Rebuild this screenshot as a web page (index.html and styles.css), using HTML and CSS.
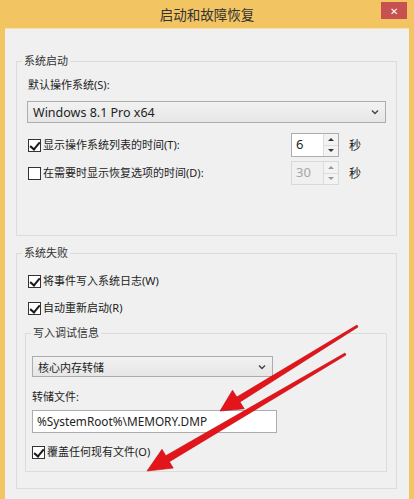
FILE: index.html
```html
<!DOCTYPE html>
<html lang="zh-CN">

<head>
    <meta charset="UTF-8">
    <title>启动和故障恢复</title>
    <link rel="stylesheet" href="styles.css">
</head>

<body>

    <div class="window">
        <div class="titlebar">
            <span class="title">启动和故障恢复</span>
            <span class="close">&#x2715;</span>
        </div>

        <div class="client">

            <fieldset class="group">
                <legend>系统启动</legend>
                <div class="group-body startup">
                    <div class="label">默认操作系统(S):</div>
                    <div class="select wide">
                        <span class="latin">Windows 8.1 Pro x64</span>
                        <svg class="chev" width="8" height="6" viewBox="0 0 8 6"><path d="M1 1.5 L4 4.5 L7 1.5" fill="none" stroke="#444" stroke-width="1.4"/></svg>
                    </div>
                    <div class="spin-row first">
                        <div class="check-label">
                            <span class="box checked"></span>
                            <span>显示操作系统列表的时间(T):</span>
                        </div>
                        <div class="spinner">
                            <span class="spin-value">6</span>
                            <span class="spin-btns">
                                <span class="up"></span>
                                <span class="down"></span>
                            </span>
                        </div>
                        <span class="unit">秒</span>
                    </div>
                    <div class="spin-row">
                        <div class="check-label">
                            <span class="box"></span>
                            <span>在需要时显示恢复选项的时间(D):</span>
                        </div>
                        <div class="spinner disabled">
                            <span class="spin-value">30</span>
                            <span class="spin-btns">
                                <span class="up"></span>
                                <span class="down"></span>
                            </span>
                        </div>
                        <span class="unit">秒</span>
                    </div>
                </div>
            </fieldset>

            <fieldset class="group failure">
                <legend>系统失败</legend>
                <div class="group-body">
                    <div class="check-label row-a">
                        <span class="box checked"></span>
                        <span>将事件写入系统日志(W)</span>
                    </div>
                    <div class="check-label row-b">
                        <span class="box checked"></span>
                        <span>自动重新启动(R)</span>
                    </div>

                    <fieldset class="group inner">
                        <legend>写入调试信息</legend>
                        <div class="group-body">
                            <div class="select dump">
                                <span>核心内存转储</span>
                                <svg class="chev" width="8" height="6" viewBox="0 0 8 6"><path d="M1 1.5 L4 4.5 L7 1.5" fill="none" stroke="#444" stroke-width="1.4"/></svg>
                            </div>
                            <div class="label file-label">转储文件:</div>
                            <div class="textbox">%SystemRoot%\MEMORY.DMP</div>
                            <div class="check-label row-c">
                                <span class="box checked"></span>
                                <span>覆盖任何现有文件(O)</span>
                            </div>
                        </div>
                    </fieldset>
                </div>
            </fieldset>

        </div>

        <!-- red annotation arrows drawn over the dialog -->
        <svg class="arrows" width="414" height="499" viewBox="0 0 414 499">
            <polygon points="357,325 358,327 240,402 244.3,408.8 220,411 232.5,390.2 236.8,397" fill="#e3141a" stroke="#c00810" stroke-width="0.6" stroke-linejoin="round"/>
            <polygon points="345,353 346,355 169.4,461.7 173.2,468.1 147,471 162,449.3 165.8,455.7" fill="#e3141a" stroke="#c00810" stroke-width="0.6" stroke-linejoin="round"/>
        </svg>
    </div>

</body>

</html>
```

FILE: styles.css
```css
* {
    margin: 0;
    padding: 0;
    box-sizing: border-box;
}

body {
    width: 414px;
    height: 499px;
    overflow: hidden;
    font-family: "Noto Sans", "Noto Sans CJK SC", sans-serif;
    font-size: 11px;
    color: #222;
    background: #f2c462;
}

.window {
    position: relative;
    width: 414px;
    height: 499px;
    background: #f2c462;
    padding: 0 5px;
    display: flex;
    flex-direction: column;
}

.titlebar {
    height: 28px;
    display: flex;
    align-items: center;
    justify-content: center;
}

.title {
    font-family: "Noto Sans CJK SC", sans-serif;
    font-size: 13.5px;
    color: #333;
    margin-top: -1px;
}

.close {
    position: absolute;
    top: 2px;
    right: 7px;
    width: 26px;
    height: 17px;
    background: #c75050;
    color: #fff;
    font-size: 10px;
    display: flex;
    align-items: center;
    justify-content: center;
}

.client {
    flex: 1;
    background: #f0f0f0;
    border-top: 1px solid #f7dfa8;
    padding: 24px 12px 0 11px;
}

/* group boxes */

.group {
    border: 1px solid #dcdcdc;
    min-width: 0;
}

.group legend {
    margin-left: 5px;
    padding: 0 2px;
    line-height: 16px;
    font-size: 11px;
    color: #333;
}

.group-body {
    padding: 0 10px 0 10px;
}

.startup {
    padding-bottom: 50px;
}

.label {
    line-height: 16px;
    margin-top: 8px;
    padding-left: 1px;
}

.select {
    height: 22px;
    margin-top: 8px;
    border: 1px solid #acacac;
    background: linear-gradient(#f2f2f2, #e6e6e6);
    display: flex;
    align-items: center;
    justify-content: space-between;
    padding: 0 6px 0 5px;
}

.select .latin {
    font-size: 12.5px;
}

.spin-row {
    height: 24px;
    margin-top: 4px;
    display: flex;
    align-items: center;
}

.spin-row.first {
    margin-top: 10px;
}

.check-label {
    display: flex;
    align-items: center;
    gap: 2px;
    line-height: 16px;
    white-space: nowrap;
}

.spin-row .check-label {
    width: 264px;
    padding-left: 1px;
}

.box {
    width: 13px;
    height: 13px;
    border: 1px solid #333;
    background: #fff;
    flex: none;
    position: relative;
}

.box.checked::after {
    content: "";
    position: absolute;
    left: 3px;
    top: 0px;
    width: 4px;
    height: 8px;
    border-right: 2px solid #1a1a1a;
    border-bottom: 2px solid #1a1a1a;
    transform: rotate(40deg);
}

.spinner {
    width: 48px;
    height: 24px;
    border: 1px solid #abadb3;
    background: #fff;
    display: flex;
}

.spin-value {
    flex: 1;
    padding-left: 4px;
    line-height: 21px;
    font-size: 13px;
}

.spin-btns {
    width: 15px;
    display: flex;
    flex-direction: column;
    border-left: 1px solid #dcdcdc;
}

.spin-btns span {
    flex: 1;
    background: #f3f3f3;
    display: flex;
    align-items: center;
    justify-content: center;
}

.spin-btns .up {
    border-bottom: 1px solid #dcdcdc;
}

.spin-btns .up::after {
    content: "";
    border-left: 3px solid transparent;
    border-right: 3px solid transparent;
    border-bottom: 3px solid #333;
}

.spin-btns .down::after {
    content: "";
    border-left: 3px solid transparent;
    border-right: 3px solid transparent;
    border-top: 3px solid #333;
}

.spinner.disabled {
    border-color: #d9d9d9;
    background: #f0f0f0;
}

.spinner.disabled .spin-value {
    color: #a6a6a6;
}

.spinner.disabled .spin-btns span::after {
    border-top-color: #999;
    border-bottom-color: #999;
}

.unit {
    margin-left: 10px;
    font-size: 12px;
}

/* system failure */

.failure {
    margin-top: 9px;
}

.failure > .group-body {
    padding: 0 9px 16px 8px;
}

.row-a {
    margin-top: 12px;
    padding-left: 3px;
}

.row-b {
    margin-top: 11px;
    padding-left: 3px;
}

.inner {
    margin-top: 9px;
}

.inner > .group-body {
    padding: 0 6px 11px 6px;
}

.dump {
    width: 241px;
    height: 21px;
    margin-top: 15px;
}

.file-label {
    margin-top: 12px;
    padding-left: 0;
}

.textbox {
    width: 245px;
    height: 23px;
    margin-top: 5px;
    border: 1px solid #abadb3;
    background: #fff;
    padding-left: 4px;
    line-height: 21px;
    font-size: 11.8px;
}

.row-c {
    margin-top: 11px;
}

.arrows {
    position: absolute;
    left: 0;
    top: 0;
    pointer-events: none;
}
```
